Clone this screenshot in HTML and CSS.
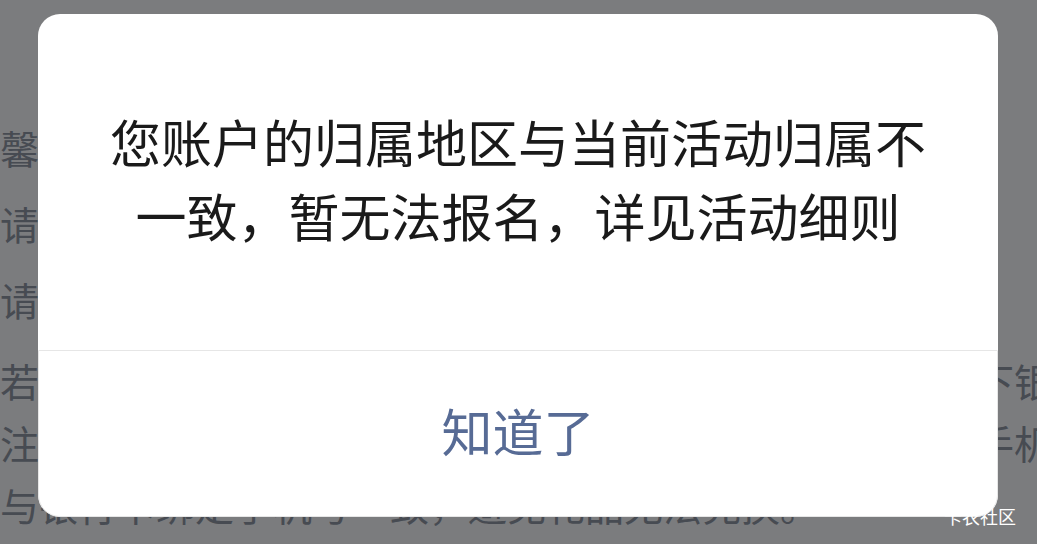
FILE: index.html
```html
<!DOCTYPE html>
<html lang="zh-CN">
  <head>
    <meta charset="UTF-8" />
    <meta name="viewport" content="width=device-width, initial-scale=1.0" />
    <title>活动报名</title>
    <link rel="stylesheet" href="styles.css">
  </head>
  <body>
    <div class="page">
      <div class="notice">
        <p>馨提示：</p>
        <p>请核对您的账户信息，确保与本人身份信息一致；</p>
        <p>请使用本人实名认证的账户参与本次活动；</p>
      </div>
      <div class="rules">
        <p>若您的手机号未在本平台注册，请完成注册并绑定本人名下银行卡；</p>
        <p>注意：所绑定的银行卡预留手机号须与您在本平台的注册手机号</p>
        <p>与银行卡绑定手机号一致，避免礼品无法兑换。</p>
      </div>
    </div>

    <div class="dialog">
      <div class="dialog-body">
        <p class="dialog-text">
          您账户的归属地区与当前活动归属不<br />一致，暂无法报名，详见活动细则
        </p>
      </div>
      <div class="dialog-footer">
        <button type="button" class="dialog-button">知道了</button>
      </div>
    </div>

    <div class="watermark">卡农社区</div>
  </body>
</html>
```

FILE: styles.css
```css
/* General styles */
body {
  margin: 0;
  height: 544px;
  overflow: hidden;
  background-color: #7b7c7e;
  font-family: "Noto Sans CJK SC", "Noto Sans", sans-serif;
}

/* Page behind the mask */
.page {
  padding-top: 109px;
  color: #474b52;
  font-size: 39px;
  white-space: nowrap;
}

.page p {
  margin: 0;
}

.notice p {
  line-height: 76px;
}

.rules {
  margin-top: 12px;
}

.rules p {
  line-height: 62px;
}

/* Dialog */
.dialog {
  position: absolute;
  top: 14px;
  left: 38px;
  width: 960px;
  height: 503px;
  display: flex;
  flex-direction: column;
  background-color: #fff;
  border-radius: 22px;
  overflow: hidden;
}

.dialog-body {
  height: 336px;
  padding-bottom: 8px;
  box-sizing: border-box;
  display: flex;
  align-items: center;
  justify-content: center;
}

.dialog-text {
  margin: 0;
  text-align: center;
  font-size: 51px;
  line-height: 74px;
  color: #1a1a1a;
}

.dialog-footer {
  flex: 1;
  display: flex;
  padding-bottom: 8px;
  border: 1px solid #e6e6e6;
  border-radius: 0 0 22px 22px;
}

.dialog-button {
  flex: 1;
  border: none;
  background: none;
  padding: 0;
  font-family: inherit;
  font-size: 51px;
  color: #576b95;
  cursor: pointer;
}

/* Screenshot watermark */
.watermark {
  position: absolute;
  right: 21px;
  bottom: 17px;
  font-size: 18px;
  line-height: 22px;
  color: #fff;
}
```
